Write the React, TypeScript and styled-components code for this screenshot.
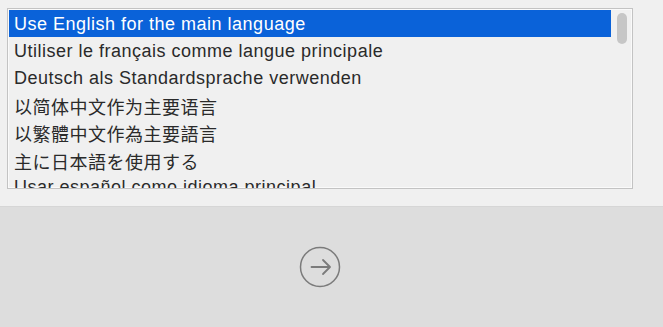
import React from "react";
import styled, { createGlobalStyle } from "styled-components";

const languages = [
  "Use English for the main language",
  "Utiliser le français comme langue principale",
  "Deutsch als Standardsprache verwenden",
  "以简体中文作为主要语言",
  "以繁體中文作為主要語言",
  "主に日本語を使用する",
  "Usar español como idioma principal",
];

export default function App() {
  const selected = 0;
  return (
    <>
      <GlobalStyle />
      <Page>
        <TopPanel>
          <ListBox>
            <Rows>
              {languages.map((lang, i) => (
                <Row key={lang} active={i === selected}>
                  {lang}
                </Row>
              ))}
            </Rows>
            <ScrollTrack>
              <ScrollThumb />
            </ScrollTrack>
          </ListBox>
        </TopPanel>
        <BottomPanel>
          <NextButton aria-label="continue">
            <svg width="42" height="42" viewBox="0 0 42 42" fill="none">
              <circle cx="21" cy="21" r="19.5" stroke="#7b7b7b" strokeWidth="1.5" />
              <path
                d="M12.5 21h18M24 14l7 7-7 7"
                stroke="#7b7b7b"
                strokeWidth="1.8"
                strokeLinecap="round"
                strokeLinejoin="round"
              />
            </svg>
          </NextButton>
        </BottomPanel>
      </Page>
    </>
  );
}

const GlobalStyle = createGlobalStyle`
  html, body {
    margin: 0;
    padding: 0;
    background: #dddddd;
  }
  body {
    font-family: "Liberation Sans", "Noto Sans CJK SC", sans-serif;
  }
`;

const Page = styled.div`
  width: 663px;
  height: 327px;
  display: flex;
  flex-direction: column;
`;

const TopPanel = styled.div`
  height: 206px;
  box-sizing: border-box;
  padding: 8px 30px 0 7px;
  background: #f0f0f0;
`;

const ListBox = styled.div`
  height: 181px;
  box-sizing: border-box;
  border: 1px solid #c3c3c3;
  box-shadow: inset 0 0 0 1px #fafafa;
  background: #f0f0f0;
  display: flex;
  overflow: hidden;
`;

const Rows = styled.div`
  flex: 1;
  padding-top: 1px;
  padding-left: 1px;
  display: flex;
  flex-direction: column;
`;

interface RowProps {
  active: boolean;
}
const Row = styled.div<RowProps>`
  height: 27.2px;
  box-sizing: border-box;
  flex-shrink: 0;
  padding: 2px 0 0 5px;
  display: flex;
  align-items: center;
  font-size: 18px;
  letter-spacing: 0.5px;
  white-space: nowrap;
  color: ${({ active }) => (active ? "#ffffff" : "#2a2a2a")};
  background: ${({ active }) => (active ? "#0a62d9" : "transparent")};
`;

const ScrollTrack = styled.div`
  width: 21px;
  flex-shrink: 0;
  display: flex;
  justify-content: center;
  padding-top: 4px;
`;

const ScrollThumb = styled.div`
  width: 10px;
  height: 31px;
  border-radius: 5px;
  background: #c6c6c6;
`;

const BottomPanel = styled.div`
  flex: 1;
  background: #dddddd;
  border-top: 1px solid #d6d6d6;
  padding: 0 30px 0 7px;
  display: flex;
  align-items: center;
  justify-content: center;
`;

const NextButton = styled.button`
  border: none;
  background: none;
  padding: 0;
  width: 42px;
  height: 42px;
  display: flex;
  cursor: pointer;
`;
